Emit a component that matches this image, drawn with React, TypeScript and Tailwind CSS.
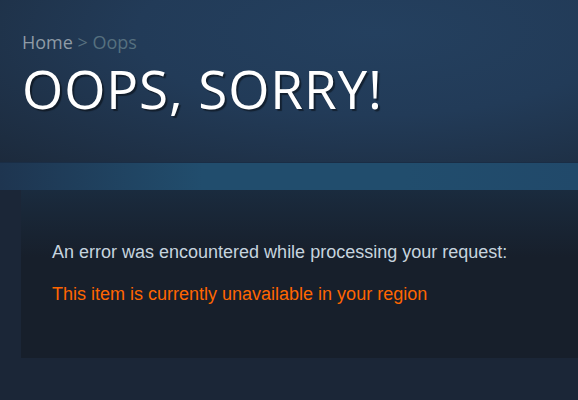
export default function App() {
  return (
    <div className="min-h-[400px] w-full overflow-hidden bg-[#1b2637] font-['Open_Sans',sans-serif]">
      <header className="h-[162px] bg-[radial-gradient(ellipse_at_65%_20%,#24405f_0%,#223b58_45%,#1c2a3c_100%)] pl-[22px] pt-[31px]">
        <div className="text-[18px] leading-[22px]">
          <span className="text-[#8f9ba6]">Home</span>
          <span className="text-[#56707f]"> &gt; Oops</span>
        </div>
        <h1 className="mt-[8px] whitespace-nowrap text-[53px] font-[370] leading-[56px] tracking-[0.9px] text-white [text-shadow:2px_2px_1px_rgba(0,0,0,0.45)]">
          OOPS, SORRY!
        </h1>
      </header>

      <div className="h-[28px] border-t border-[#1a2d45] bg-[linear-gradient(to_right,#1e3550_0%,#214d6d_35%,#214d6d_70%,#21496a_100%)]" />

      <div className="pl-[21px]">
        <div className="h-[168px] w-[700px] bg-[linear-gradient(to_bottom,#1a2b3e_0%,#171f2b_40%,#171f2b_100%)] pl-[31px] pt-[51px] font-['Liberation_Sans',Arial,sans-serif] text-[18px]">
          <p className="leading-[22px] text-[#c6d4df]">
            An error was encountered while processing your request:
          </p>
          <p className="mt-[20px] leading-[22px] text-[#ff6600]">
            This item is currently unavailable in your region
          </p>
        </div>
      </div>
    </div>
  );
}
